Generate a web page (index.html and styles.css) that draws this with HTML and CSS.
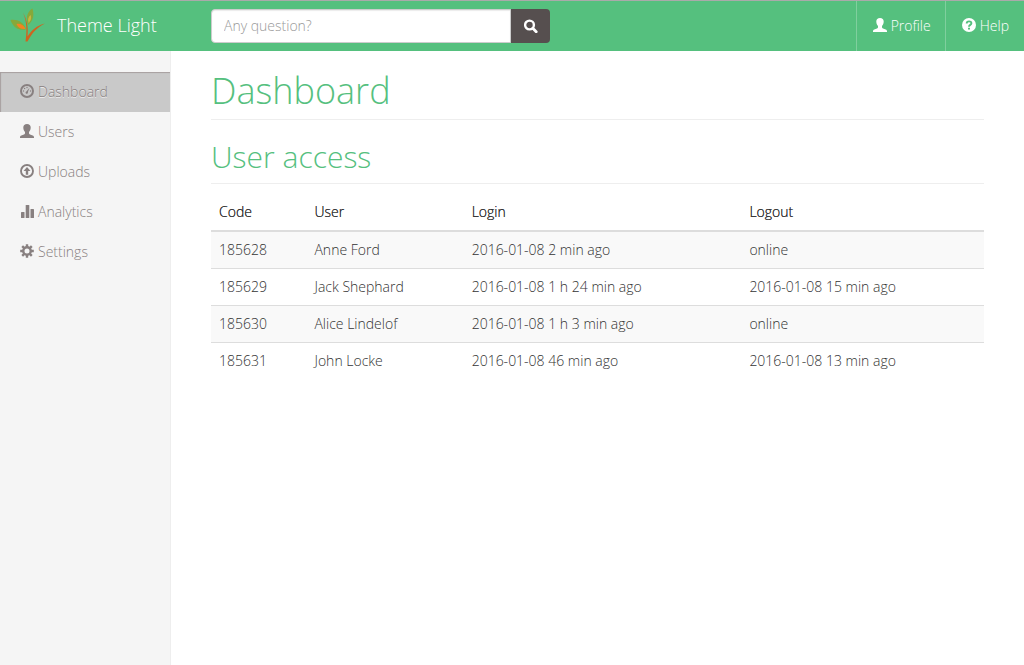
FILE: index.html
```html
<!DOCTYPE html>
<html lang="en">
<head>
<meta charset="utf-8">
<meta name="viewport" content="width=device-width, initial-scale=1">
<title>Theme Light</title>
<link rel="stylesheet" href="styles.css">
</head>
<body>
<svg class="sprite" aria-hidden="true">
  <symbol id="user" viewBox="0 0 14 14"><path d="M7 0C9.300 0 10.700 1.400 10.700 3.600C10.700 5.500 10.100 7 9 8.100V9.300C9 9.900 9.400 10.200 10 10.400L12.700 11.500C13.600 11.900 14 12.400 14 13.300V14H0V13.300C0 12.400.4 11.900 1.300 11.500L4 10.400C4.600 10.200 5 9.900 5 9.300V8.100C3.900 7 3.300 5.500 3.300 3.600C3.300 1.400 4.700 0 7 0Z"/></symbol>
</svg>
<header class="navbar">
  <a class="brand" href="#">
    <svg class="logo" viewBox="0 0 36 34" aria-hidden="true">
      <path fill="#86a83a" d="M.5 12C7 11 14 14 16 21.500C8 23 3 19 .5 12Z"/>
      <path fill="#f58220" d="M6.500 16C10 15 14 17 15.500 21C11 21.500 8 20 6.500 16Z"/>
      <path fill="#86a83a" d="M22.500.5C24.500 8 23 13 18 17C15 9 18 3 22.500.5Z"/>
      <path fill="#c9b541" d="M20.500 7C22 10 20.500 13 18.500 15C17.500 11 18.500 9 20.500 7Z"/>
      <path fill="#cf6420" d="M13 4.500C17 12 18.500 19 17.500 28.500C21 23 27 17 35 15.500C27 19.500 22 25 17.500 33.500H15.500C17 23 17 14 13 4.500Z"/>
    </svg>
    <span>Theme Light</span>
  </a>
  <form class="search" role="search">
    <input class="search-input" type="text" aria-label="Search" placeholder="Any question?">
    <button class="search-button" type="button" aria-label="Search">
      <svg class="icon" viewBox="0 0 14 14" aria-hidden="true"><circle cx="5.500" cy="6" r="4.400" fill="none" stroke="currentColor" stroke-width="2.400"/><path d="M8.800 9.300L12.200 12.700" stroke="currentColor" stroke-width="2.800" stroke-linecap="round"/></svg>
    </button>
  </form>
  <nav class="account" aria-label="Account">
    <a class="account-link" href="#"><svg class="icon" aria-hidden="true"><use href="#user"/></svg><span>Profile</span></a>
    <a class="account-link" href="#"><svg class="icon" viewBox="0 0 14 14" aria-hidden="true"><circle cx="7" cy="7" r="7"/><path d="M4.700 5.500C4.700 2.700 9.400 2.700 9.400 5.300C9.400 6.900 7 6.900 7 8.700" fill="none" stroke="#55c07e" stroke-width="1.900"/><path d="M6 9.700H8V11.500H6Z" fill="#55c07e"/></svg><span>Help</span></a>
  </nav>
</header>
<div class="layout">
  <nav class="sidebar" aria-label="Main">
    <a class="side-link active" href="#" aria-current="page"><svg class="icon" viewBox="0 0 14 14" aria-hidden="true"><circle cx="7" cy="7" r="6" fill="none" stroke="currentColor" stroke-width="2"/><path d="M9.500 3.700L7.900 8.100A1.200 1.200 0 1 1 6.400 7.400Z"/><circle cx="3.500" cy="7" r=".7"/><circle cx="4.600" cy="4.500" r=".7"/><circle cx="7" cy="3.500" r=".7"/><circle cx="10.500" cy="7" r=".7"/></svg><span>Dashboard</span></a>
    <a class="side-link" href="#"><svg class="icon" aria-hidden="true"><use href="#user"/></svg><span>Users</span></a>
    <a class="side-link" href="#"><svg class="icon" viewBox="0 0 14 14" aria-hidden="true"><circle cx="7" cy="7" r="6" fill="none" stroke="currentColor" stroke-width="1.900"/><path d="M7 3L10.500 7H8.200V10.700H5.800V7H3.500Z"/></svg><span>Uploads</span></a>
    <a class="side-link" href="#"><svg class="icon" viewBox="0 0 14 14" aria-hidden="true"><rect x="1" y="8" width="3.500" height="6" rx=".6"/><rect x="5.700" y="1" width="3.600" height="13" rx=".6"/><rect x="10.500" y="5" width="3.500" height="9" rx=".6"/></svg><span>Analytics</span></a>
    <a class="side-link" href="#"><svg class="icon" viewBox="0 0 14 14" aria-hidden="true"><circle cx="7" cy="7" r="3.700" fill="none" stroke="currentColor" stroke-width="2.400"/><path d="M7 .2V3M7 11V13.800M.2 7H3M11 7H13.800M2.200 2.200L4.200 4.200M9.800 9.800L11.800 11.800M11.800 2.200L9.800 4.200M4.200 9.800L2.200 11.800" stroke="currentColor" stroke-width="2.400"/></svg><span>Settings</span></a>
  </nav>
  <main class="content">
    <h1 class="title">Dashboard</h1>
    <h2 class="subtitle">User access</h2>
    <table class="table">
      <thead><tr><th>Code</th><th>User</th><th>Login</th><th>Logout</th></tr></thead>
      <tbody>
        <tr><td>185628</td><td>Anne Ford</td><td>2016-01-08 2 min ago</td><td>online</td></tr>
        <tr><td>185629</td><td>Jack Shephard</td><td>2016-01-08 1 h 24 min ago</td><td>2016-01-08 15 min ago</td></tr>
        <tr><td>185630</td><td>Alice Lindelof</td><td>2016-01-08 1 h 3 min ago</td><td>online</td></tr>
        <tr><td>185631</td><td>John Locke</td><td>2016-01-08 46 min ago</td><td>2016-01-08 13 min ago</td></tr>
      </tbody>
    </table>
  </main>
</div>
</body>
</html>
```
FILE: styles.css
```css
* { box-sizing: border-box; }

body {
  margin: 0;
  min-height: 100vh;
  display: flex;
  flex-direction: column;
  background: #fff;
  color: #333;
  font: 300 14px/20px "Open Sans", sans-serif;
}

a { color: inherit; text-decoration: none; }

.sprite { display: none; }

.icon {
  width: 14px;
  height: 14px;
  flex: none;
  margin-bottom: 2px;
  fill: currentColor;
}

.navbar {
  display: flex;
  align-items: stretch;
  height: 51px;
  border-top: 1px solid #aaa;
  background: #55c07e;
  color: #fff;
}

.brand {
  display: flex;
  align-items: center;
  gap: 11px;
  width: 211px;
  padding: 0 0 2px 10px;
  font-size: 18px;
}

.logo { width: 36px; height: 34px; }

.search {
  display: flex;
  align-items: center;
}

.search-input {
  width: 300px;
  height: 34px;
  padding: 5px 12px 7px;
  border: 1px solid #ccc;
  border-radius: 4px 0 0 4px;
  background: #fff;
  box-shadow: inset 0 1px 1px rgba(0, 0, 0, .08);
  color: #555;
  font: inherit;
}

.search-input::placeholder { color: #999; opacity: 1; }

.search-button {
  display: flex;
  align-items: center;
  justify-content: center;
  width: 39px;
  height: 34px;
  padding: 0;
  border: 0;
  border-radius: 0 4px 4px 0;
  background: #564f4f;
  color: #fff;
}

.search-button .icon { margin: 0; }

.account { display: flex; margin-left: auto; }

.account-link {
  display: flex;
  align-items: center;
  gap: 4px;
  padding: 0 14px 0 16px;
  border-left: 1px solid #80cf9e;
}

.account-link:last-child { padding-right: 15px; }

.layout { display: flex; flex: 1; }

.sidebar {
  flex: none;
  width: 171px;
  padding-top: 21px;
  border-right: 1px solid #eee;
  background: #f5f5f5;
  color: #888080;
}

.side-link {
  display: flex;
  align-items: center;
  gap: 4px;
  height: 40px;
  padding: 0 20px;
}

.active {
  background: #c9c9c9;
  box-shadow: inset 1px 1px 1px #a79f9f;
  text-shadow: 0 1px 0 #eee;
}

.content {
  flex: 1;
  min-width: 0;
  padding: 20px 40px;
}

.title, .subtitle {
  margin: 0 0 20px;
  padding-bottom: 9px;
  border-bottom: 1px solid #eee;
  color: #55c07e;
  font-weight: 300;
}

.title { font-size: 36px; line-height: 39px; }

.subtitle { margin-bottom: 10px; font-size: 30px; line-height: 34px; }

.table {
  width: 100%;
  border-collapse: collapse;
}

.table th, .table td { padding: 8px; text-align: left; }

.table th {
  border-bottom: 2px solid #ddd;
  font-weight: 300;
  text-shadow: 0 0 0 #333;
}

.table td { border-top: 1px solid #ddd; }

.table tbody tr:first-child td { border-top: 0; }

.table tbody tr:nth-child(odd) { background: #f9f9f9; }
```
